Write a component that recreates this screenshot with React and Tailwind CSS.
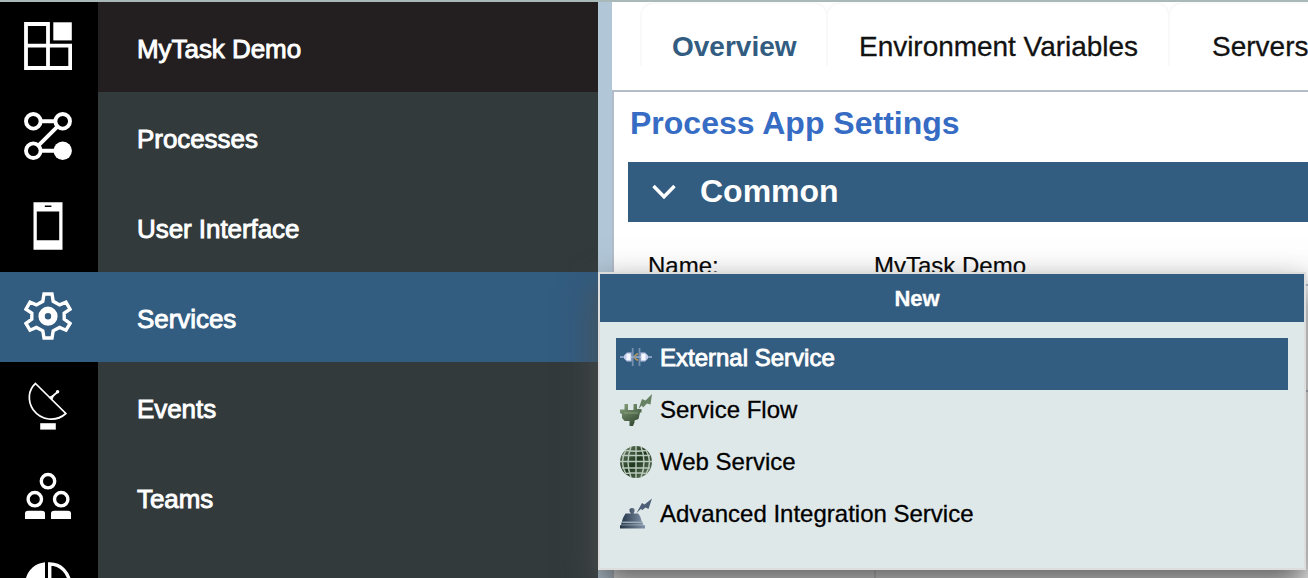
import React from "react";

const svg = { width: 48, height: 48, viewBox: "0 0 48 48", fill: "none", stroke: "white" };

function LayoutIcon() {
  return (
    <svg {...svg} strokeWidth="3.8">
      <path d="M24 2V46M2 23.7H46.2V46H2V2H24V23.7" />
      <path d="M29.3 0.3H47.8V18.4H29.3Z" fill="white" stroke="none" />
    </svg>
  );
}

function ProcessIcon() {
  return (
    <svg {...svg} strokeWidth="3.9">
      <circle cx="9.3" cy="9.3" r="7.3" />
      <circle cx="38.7" cy="9.3" r="7.3" />
      <circle cx="9.3" cy="38.7" r="7.3" />
      <circle cx="38.7" cy="38.7" r="9.2" fill="white" stroke="none" />
      <path d="M16 9.3H32M16 38.7H32M14.3 33.7L33.7 14.3" />
    </svg>
  );
}

function PhoneIcon() {
  return (
    <svg {...svg} stroke="none">
      <path d="M9.5 0.3H38.5V47.7H9.5Z" fill="white" />
      <path d="M12.8 9.6H35.2V38.2H12.8ZM20.8 3.6H27.4V5H20.8Z" fill="black" />
    </svg>
  );
}

function GearIcon() {
  return (
    <svg {...svg}>
      <path
        strokeWidth="3.4"
        d="M20 2H28L29.2 9.3L35.6 12.9L42 10.2L46 17.2L40.2 21.2V27.2L46 31.5L42 38.2L35.6 35.4L29.2 38.8L28 46H20L18.8 38.8L12.4 35.4L6 38.2L2 31.5L7.8 27.2V21.2L2 17.2L6 10.2L12.4 12.9L18.8 9.3Z"
      />
      <circle cx="24" cy="24.2" r="6.4" strokeWidth="6.4" />
    </svg>
  );
}

function DishIcon() {
  return (
    <svg {...svg} strokeWidth="1.7">
      <path d="M11.5 1.5L41.8 31.5C32 40.5 17 38.5 9 27.5C3.5 19 4 8 11.5 1.5Z" />
      <path d="M26.5 16L33.5 10" strokeWidth="1.8" />
      <path d="M24.5 15.2L30.8 12.2L28 18.5Z" fill="white" stroke="none" />
      <circle cx="33.6" cy="9.8" r="1.7" fill="white" stroke="none" />
      <path d="M16.2 41.2H31.8V47.6H16.2Z" fill="white" stroke="none" />
    </svg>
  );
}

function TeamIcon() {
  return (
    <svg {...svg} strokeWidth="3.4">
      <circle cx="24" cy="9.2" r="6.7" />
      <circle cx="10.8" cy="27.2" r="6.7" />
      <circle cx="37.2" cy="27.2" r="6.7" />
      <path
        d="M1 47V41.6Q1 38.8 4 38.8H18Q21 38.8 21 41.6V47ZM27 47V41.6Q27 38.8 30 38.8H44Q47 38.8 47 41.6V47Z"
        fill="white"
        stroke="none"
      />
    </svg>
  );
}

function PieIcon() {
  return (
    <svg {...svg}>
      <path d="M21 0.2C-6 3 -6 45 21 48Z" fill="white" stroke="none" />
      <path d="M25.7 2V22H46C45 11 37 2 25.7 2Z" strokeWidth="3.4" />
    </svg>
  );
}

function ExternalIcon() {
  return (
    <svg width="32" height="32" viewBox="0 0 32 32" fill="none" className="-mt-[1px]">
      <path d="M0 16H32" stroke="#a5b6d8" strokeWidth="1.8" opacity=".8" />
      <path d="M12.7 7V25M19.5 7V25" stroke="#92a5c6" strokeWidth="1.8" opacity=".7" />
      <path d="M4 14.5L7 11.5H11.5V20.5H7L4 17.5ZM28 14.5L25 11.5H20.5V20.5H25L28 17.5Z" fill="#c0cbe8" />
      <path d="M6.5 13H10.5V19H6.5ZM21.5 13H25.5V19H21.5Z" fill="#f5f7ff" />
      <path d="M14.5 15L18 12.5M14.5 17L18 19.5" stroke="#b2945d" strokeWidth="1.6" />
    </svg>
  );
}

function FlowIcon() {
  return (
    <svg width="32" height="32" viewBox="0 0 32 32">
      <defs>
        <linearGradient id="plug" x1="0" y1="0" x2=".6" y2="1">
          <stop stopColor="#88a37d" />
          <stop offset="1" stopColor="#354b33" />
        </linearGradient>
      </defs>
      <path
        d="M4.5 10H8V16H13.5V10H17V15H21.5V18.5H20L18.5 25L14.5 26.5V28.5L13 32H9.5V27H4.5L2 24V20L0 19V15.5H4.5Z"
        fill="url(#plug)"
      />
      <path d="M18.5 15L22 5L25.5 6.5L32 0L30.5 10.5L27 9.5L23 13.5L21.8 11.5Z" fill="#668263" />
      <path d="M4 19H18" stroke="#9fb594" strokeWidth="1.3" opacity=".5" />
    </svg>
  );
}

function WebIcon() {
  return (
    <svg width="32" height="32" viewBox="0 0 32 32" fill="none">
      <defs>
        <linearGradient id="globe" x1="0" y1="0" x2="1" y2="1">
          <stop stopColor="#70866c" />
          <stop offset=".5" stopColor="#20371f" />
          <stop offset="1" stopColor="#70866c" />
        </linearGradient>
      </defs>
      <circle cx="16" cy="16" r="16" fill="url(#globe)" />
      <g stroke="#b9c9bb" strokeWidth="1.4">
        <path d="M16 0V32M0 15.5H32M2 9.5H30M2 22H30M6 4.5Q16 6 26 4.5M6 27.5Q16 26 26 27.5" />
        <path d="M11 0.8Q5 16 11 31.2M21 0.8Q27 16 21 31.2M6 3.8Q-1 16 6 28.2M26 3.8Q33 16 26 28.2" />
      </g>
    </svg>
  );
}

function IntegrationIcon() {
  return (
    <svg width="32" height="32" viewBox="0 0 32 32">
      <defs>
        <linearGradient id="bell" x1="0" y1="0" x2="1" y2="0">
          <stop stopColor="#223447" />
          <stop offset="1" stopColor="#8192a8" />
        </linearGradient>
      </defs>
      <path
        d="M9.5 13.5V11Q12 9 14.5 11V13.5L13.5 15.5H18Q20.5 17.5 21.5 23L23.5 26.8H1L3 20L5.5 15.5H11Z"
        fill="url(#bell)"
      />
      <path d="M0 27.2H25V30.5H0Z" fill="url(#bell)" />
      <path d="M2.2 24.3H22.5" stroke="#9babba" strokeWidth="1.5" />
      <path d="M16.5 15L22 5L24.5 6.5L32 0.5L28.5 11L25.5 9.5L22.5 12L20.8 11Z" fill="#4d6077" />
    </svg>
  );
}

const navItems = [
  { label: "MyTask Demo", Icon: LayoutIcon, bg: "bg-[#231f20]", rail: "bg-black" },
  { label: "Processes", Icon: ProcessIcon, bg: "bg-[#323a3c]", rail: "bg-black" },
  { label: "User Interface", Icon: PhoneIcon, bg: "bg-[#323a3c]", rail: "bg-black" },
  { label: "Services", Icon: GearIcon, bg: "bg-[#325c80]", rail: "bg-[#325c80]" },
  { label: "Events", Icon: DishIcon, bg: "bg-[#323a3c]", rail: "bg-black" },
  { label: "Teams", Icon: TeamIcon, bg: "bg-[#323a3c]", rail: "bg-black" },
  { label: "", Icon: PieIcon, bg: "bg-[#323a3c]", rail: "bg-black" },
];

const menuItems = [
  { label: "External Service", Icon: ExternalIcon, cls: "bg-[#325c80] text-white [-webkit-text-stroke:0.9px_white]" },
  { label: "Service Flow", Icon: FlowIcon, cls: "text-black [-webkit-text-stroke:0.3px_black]" },
  { label: "Web Service", Icon: WebIcon, cls: "text-black [-webkit-text-stroke:0.3px_black]" },
  { label: "Advanced Integration Service", Icon: IntegrationIcon, cls: "text-black [-webkit-text-stroke:0.3px_black]" },
];

const tabClass =
  "h-[64px] shrink-0 rounded-t-[14px] border-2 border-b-0 border-[#f9f9f9] text-[28px] leading-[85px] whitespace-nowrap";

export default function App() {
  return (
    <div className="relative flex h-[578px] w-[1308px] flex-col overflow-hidden border-t-2 border-[#a9b8b8] bg-white font-['Liberation_Sans',Arial,sans-serif]">
      <div className="flex h-[576px]">
        <nav className="h-[576px] w-[598px] shrink-0 overflow-hidden">
          {navItems.map(({ label, Icon, bg, rail }, i) => (
            <div key={i} className={`flex h-[90px] ${bg}`}>
              <div className={`flex w-[98px] shrink-0 justify-center pr-[2px] pt-5 ${rail}`}>
                <Icon />
              </div>
              <span className="pl-[39px] pt-[2px] text-[26px] leading-[90px] tracking-[-0.06px] text-white [-webkit-text-stroke:0.9px_white]">
                {label}
              </span>
            </div>
          ))}
        </nav>
        <div className="w-[14px] shrink-0 bg-[#b1c6d7]" />
        <main className="flex w-[696px] flex-col">
          <div className="flex h-[88px] shrink-0 overflow-hidden pl-[28px]">
            <div className={`${tabClass} w-[188px] pl-[30px] font-bold text-[#325c80]`}>Overview</div>
            <div className={`${tabClass} -ml-[2px] w-[344px] pl-[31px] tracking-[-0.03px] text-[#121212] [-webkit-text-stroke:0.3px_#121212]`}>
              Environment Variables
            </div>
            <div className={`${tabClass} -ml-[2px] w-[240px] pl-[42px] text-[#121212] [-webkit-text-stroke:0.3px_#121212]`}>Servers</div>
          </div>
          <section className="grow border-l-2 border-t-2 border-[#b3bac8] pl-[14px]">
            <h1 className="h-[70px] pl-[2px] text-[32px] font-bold leading-[62px] text-[#366cc4]">Process App Settings</h1>
            <div className="flex h-[60px] items-center bg-[#325c80] pl-[24px]">
              <svg width="24" height="16" viewBox="0 0 24 16" fill="none" stroke="white" strokeWidth="3.4">
                <path d="M1.5 2L12 12.8L22.5 2" />
              </svg>
              <h2 className="pb-[2px] pl-[24px] text-[32px] font-bold leading-[56px] text-white">Common</h2>
            </div>
            <div className="flex h-[62px] pl-[20px] pt-[28px] text-[24px] leading-[32px] text-black [-webkit-text-stroke:0.2px_black]">
              <span className="w-[226px]">Name:</span>
              <span>MyTask Demo</span>
            </div>
            <div className="flex h-[108px] border-y-2 border-[#b3bac8]" />
            <div className="ml-[246px] h-[190px] border-l-2 border-[#d5d5d5]" />
          </section>
        </main>
      </div>

      <div
        role="menu"
        className="absolute left-[598px] top-[270px] h-[298px] w-[708px] border-2 border-[#dcdddc] bg-[#dfe8e9] shadow-[0_16px_32px_2px_rgba(78,78,78,0.88)]"
      >
        <div className="h-[48px] bg-[#325c80] pr-[70px] text-center text-[22px] font-bold leading-[49px] text-white [-webkit-text-stroke:0.3px_white]">
          New
        </div>
        <div className="px-4 pt-4">
          {menuItems.map(({ label, Icon, cls }) => (
            <div key={label} role="menuitem" className={`flex h-[52px] gap-[8px] pl-[4px] pt-[4px] text-[24px] leading-[32px] ${cls}`}>
              <Icon />
              <span>{label}</span>
            </div>
          ))}
        </div>
      </div>
    </div>
  );
}
